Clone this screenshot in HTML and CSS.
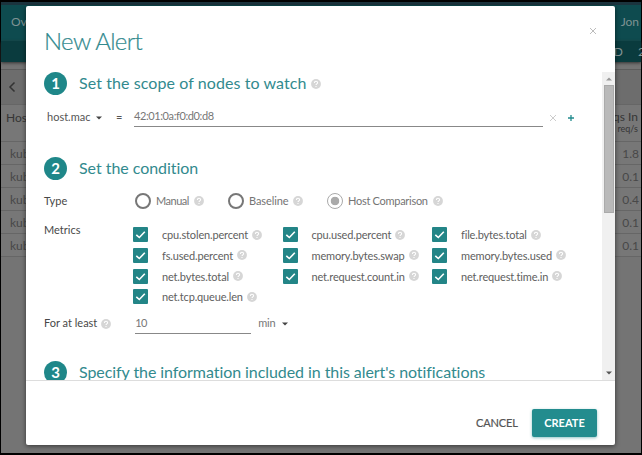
FILE: index.html
```html
<!DOCTYPE html>
<html lang="en">
<head>
<meta charset="utf-8">
<title>New Alert</title>
<link rel="stylesheet" href="styles.css">
</head>
<body>
<svg class="defs" width="0" height="0">
  <symbol id="help" viewBox="0 0 10 10"><circle cx="5" cy="5" r="4.9" fill="#d6d6d6"/><path d="M3.4 3.9C3.4 1.8 6.6 1.8 6.6 3.8C6.6 4.9 5 4.9 5 6.1M5 7V8" fill="none" stroke="#fff" stroke-width="1.1"/></symbol>
  <symbol id="check" viewBox="0 0 15 15"><path d="M3.3 7.8L6.3 10.5L11.8 4.8" fill="none" stroke="#fff" stroke-width="1.6"/></symbol>
  <symbol id="caret" viewBox="0 0 6 4"><path d="M0 .5H6L3 3.5Z" fill="currentColor"/></symbol>
  <symbol id="cross" viewBox="0 0 8 8"><path d="M1 1L7 7M7 1L1 7" fill="none" stroke="currentColor" stroke-width="1"/></symbol>
</svg>
<div class="page">
  <header class="topbar"><span>Ov</span><span>Jon</span></header>
  <nav class="subbar"><span>D</span><span class="count">2</span></nav>
  <div class="gap"></div>
  <div class="toolbar"><svg width="8" height="12" viewBox="0 0 8 12"><path d="M6.5 1.5L2 6L6.5 10.5" fill="none" stroke="#333" stroke-width="1.5"/></svg></div>
  <div class="thead"><span>Hos</span><span class="unit">qs In<small>req/s</small></span></div>
  <div class="trow"><span>kub</span><span>1.8</span></div>
  <div class="trow"><span>kub</span><span>0.1</span></div>
  <div class="trow"><span>kub</span><span>0.4</span></div>
  <div class="trow"><span>kub</span><span>0.1</span></div>
  <div class="trow"><span>kub</span><span>0.1</span></div>
</div>
<section class="dialog">
  <header class="dialog-head"><h1>New Alert</h1><svg class="close" width="8" height="8"><use href="#cross"/></svg></header>
  <div class="dialog-body">
    <div class="content">
      <div class="step"><b>1</b><h2 class="h-scope">Set the scope of nodes to watch</h2><svg class="help"><use href="#help"/></svg></div>
      <div class="scope">
        <span class="key">host.mac</span><svg class="caret"><use href="#caret"/></svg><span class="eq">=</span>
        <span class="value">42:01:0a:f0:d0:d8</span>
        <svg class="remove" width="8" height="8"><use href="#cross"/></svg>
        <svg class="add" width="8" height="8" viewBox="0 0 8 8"><path d="M4 1V7M1 4H7" stroke="#238c8e" stroke-width="1.3"/></svg>
      </div>
      <div class="step"><b>2</b><h2 class="h-cond">Set the condition</h2></div>
      <div class="type">
        <span class="label">Type</span>
        <span class="option"><i></i><span>Manual</span><svg class="help"><use href="#help"/></svg></span>
        <span class="option"><i></i><span>Baseline</span><svg class="help"><use href="#help"/></svg></span>
        <span class="option chosen"><i></i><span>Host Comparison</span><svg class="help"><use href="#help"/></svg></span>
      </div>
      <div class="metrics">
        <span class="label">Metrics</span>
        <div class="grid">
          <span class="metric"><svg class="box"><use href="#check"/></svg><span>cpu.stolen.percent</span><svg class="help"><use href="#help"/></svg></span>
          <span class="metric"><svg class="box"><use href="#check"/></svg><span>cpu.used.percent</span><svg class="help"><use href="#help"/></svg></span>
          <span class="metric"><svg class="box"><use href="#check"/></svg><span>file.bytes.total</span><svg class="help"><use href="#help"/></svg></span>
          <span class="metric"><svg class="box"><use href="#check"/></svg><span>fs.used.percent</span><svg class="help"><use href="#help"/></svg></span>
          <span class="metric"><svg class="box"><use href="#check"/></svg><span>memory.bytes.swap</span><svg class="help"><use href="#help"/></svg></span>
          <span class="metric"><svg class="box"><use href="#check"/></svg><span>memory.bytes.used</span><svg class="help"><use href="#help"/></svg></span>
          <span class="metric"><svg class="box"><use href="#check"/></svg><span>net.bytes.total</span><svg class="help"><use href="#help"/></svg></span>
          <span class="metric"><svg class="box"><use href="#check"/></svg><span>net.request.count.in</span><svg class="help"><use href="#help"/></svg></span>
          <span class="metric"><svg class="box"><use href="#check"/></svg><span>net.request.time.in</span><svg class="help"><use href="#help"/></svg></span>
          <span class="metric"><svg class="box"><use href="#check"/></svg><span>net.tcp.queue.len</span><svg class="help"><use href="#help"/></svg></span>
        </div>
      </div>
      <div class="duration">
        <span class="label">For at least</span><svg class="help"><use href="#help"/></svg>
        <span class="amount">10</span><span class="min">min</span><svg class="caret"><use href="#caret"/></svg>
      </div>
      <div class="step"><b>3</b><h2 class="h-info">Specify the information included in this alert's notifications</h2></div>
    </div>
    <div class="scrollbar"><svg class="up" width="6" height="4"><use href="#caret"/></svg><div class="thumb"></div><svg class="down" width="6" height="4"><use href="#caret"/></svg></div>
  </div>
  <footer class="dialog-foot"><span class="cancel">CANCEL</span><span class="create">CREATE</span></footer>
</section>
</body>
</html>
```
FILE: styles.css
```css
* { box-sizing: border-box; }
body { margin: 0; width: 642px; height: 455px; overflow: hidden; position: relative; font-family: Lato, "Liberation Sans", sans-serif; font-size: 11px; font-variant-ligatures: none; color: #606060; }
svg { display: block; flex: none; }
.defs { position: absolute; }
h1, h2 { margin: 0; font-weight: 400; white-space: nowrap; }
span { white-space: nowrap; }

.page { width: 642px; height: 455px; border: solid #000; border-width: 2px 1px; background: #747474; color: #353535; }
.topbar { height: 39px; border-top: 3px solid #1b343e; background: #0e4b4f; color: #7f9293; display: flex; justify-content: space-between; align-items: center; padding: 0 2px 3px 10px; font-size: 12px; }
.subbar { height: 21px; background: #0a3b3e; color: #869697; display: flex; justify-content: flex-end; align-items: center; font-size: 12px; box-shadow: 0 1px 3px #333; gap: 15px; }
.count { width: 3px; }
.gap { height: 8px; border-bottom: 1px solid #5d5d5d; }
.toolbar { height: 35px; background: #6d6d6d; border-bottom: 1px solid #666; display: flex; align-items: center; padding-left: 7px; }
.thead { height: 37px; background: #777; border-bottom: 1px solid #666; padding: 5px 3px 0 5px; display: flex; justify-content: space-between; font-size: 12px; }
.unit { text-align: right; line-height: 13px; }
.unit small { display: block; font-size: 9px; line-height: 11px; }
.trow { height: 23px; background: #777; border-bottom: 1px solid #666; padding: 0 2px 0 9px; display: flex; justify-content: space-between; align-items: center; font-size: 12px; color: #484848; }

.dialog { position: absolute; left: 26px; top: 6px; width: 589px; height: 439px; display: flex; flex-direction: column; background: #fff; border-radius: 2px; box-shadow: 0 1px 5px rgba(0,0,0,.55); }
.dialog-head { height: 66px; padding: 20px 18px 0; display: flex; justify-content: space-between; }
h1 { font-size: 24px; line-height: 29px; color: #328a8e; letter-spacing: -.65px; font-weight: 300; -webkit-text-stroke: .2px #328a8e; }
.close { color: #bcbcbc; margin-top: 1px; }
.dialog-body { height: 309px; display: flex; overflow: hidden; border-bottom: 1px solid #ddd; }
.content { flex: 1; padding-left: 18px; height: 340px; background: #fff; }
.step { height: 23px; display: flex; align-items: center; color: #328a8e; }
.step b { width: 23px; height: 23px; border-radius: 50%; background: #1f8789; color: #fff; font-size: 15px; line-height: 22px; text-align: center; margin-right: 12px; }
h2 { font-size: 16px; line-height: 21px; padding-bottom: 2px; }
.h-scope { letter-spacing: .08px; }
.h-cond { letter-spacing: -.04px; }
.h-info { letter-spacing: -.07px; }
.help { width: 10px; height: 10px; margin-left: 5px; }
.scope { height: 62px; display: flex; align-items: flex-start; padding: 12px 0 0 3px; line-height: 20px; color: #555; }
.key { width: 49px; }
.caret { width: 6px; height: 4px; margin-top: 9px; color: #444; }
.eq { width: 18px; margin-left: 14px; }
.value { width: 409px; height: 20px; border-bottom: 1px solid #888; color: #777; line-height: 18px; letter-spacing: -.4px; }
.remove { color: #ccc; margin: 7px 0 0 6px; }
.add { margin: 7px 0 0 10px; }
.type { height: 45px; padding-bottom: 4px; display: flex; align-items: center; }
.label { width: 91px; color: #484848; }
.option { display: flex; align-items: center; width: 93px; color: #747474; letter-spacing: -.28px; }
.option:nth-child(2) { letter-spacing: -.5px; }
.option:nth-child(3) { width: 99px; letter-spacing: -.1px; }
.option i { width: 16px; height: 16px; border: 2px solid #777; border-radius: 50%; margin-right: 5px; flex: none; }
.chosen { width: 130px; }
.chosen i { border: 1.5px solid #aaa; background: radial-gradient(circle, #aaa 0 4px, #fff 4.6px); }
.metrics { display: flex; height: 88px; }
.metrics .label { width: 89px; line-height: 14px; margin-top: -2px; }
.grid { display: grid; grid-template-columns: 149.5px 149.5px 140px; grid-auto-rows: 20.8px; height: 84px; padding-top: 2px; }
.metric { display: flex; align-items: center; height: 15px; line-height: 15px; letter-spacing: -.16px; }
.metric .help { margin-left: 4px; }
.box { width: 15px; height: 15px; background: #238587; border-radius: 1px; margin-right: 14px; }
.duration { height: 48px; display: flex; align-items: flex-start; line-height: 20px; }
.duration .label { width: auto; }
.duration .help { margin-top: 6px; margin-left: 4px; }
.amount { width: 116px; height: 21px; border-bottom: 1px solid #888; margin-left: 24px; letter-spacing: -.6px; color: #777; }
.min { margin-left: 7px; width: 24px; line-height: 20px; letter-spacing: -.3px; color: #777; }
.scrollbar { width: 13px; background: #f0f0f0; display: flex; flex-direction: column; align-items: center; }
.up { transform: rotate(180deg); color: #999; margin: 5px 0 4px; }
.thumb { width: 10px; height: 128px; background: #b9b9b9; border: 1px solid #aaa; }
.down { margin-top: auto; margin-bottom: 5px; color: #555; }
.dialog-foot { flex: 1; display: flex; justify-content: flex-end; align-items: flex-start; padding: 28px 18px 0 0; line-height: 27px; }
.cancel { width: 56px; color: #555; letter-spacing: -.15px; -webkit-text-stroke: .2px #555; }
.create { width: 65px; height: 28px; background: #238c8e; color: #fff; border-radius: 2px; text-align: center; font-weight: 700; box-shadow: 0 1px 3px rgba(35,140,142,.5); }
```
